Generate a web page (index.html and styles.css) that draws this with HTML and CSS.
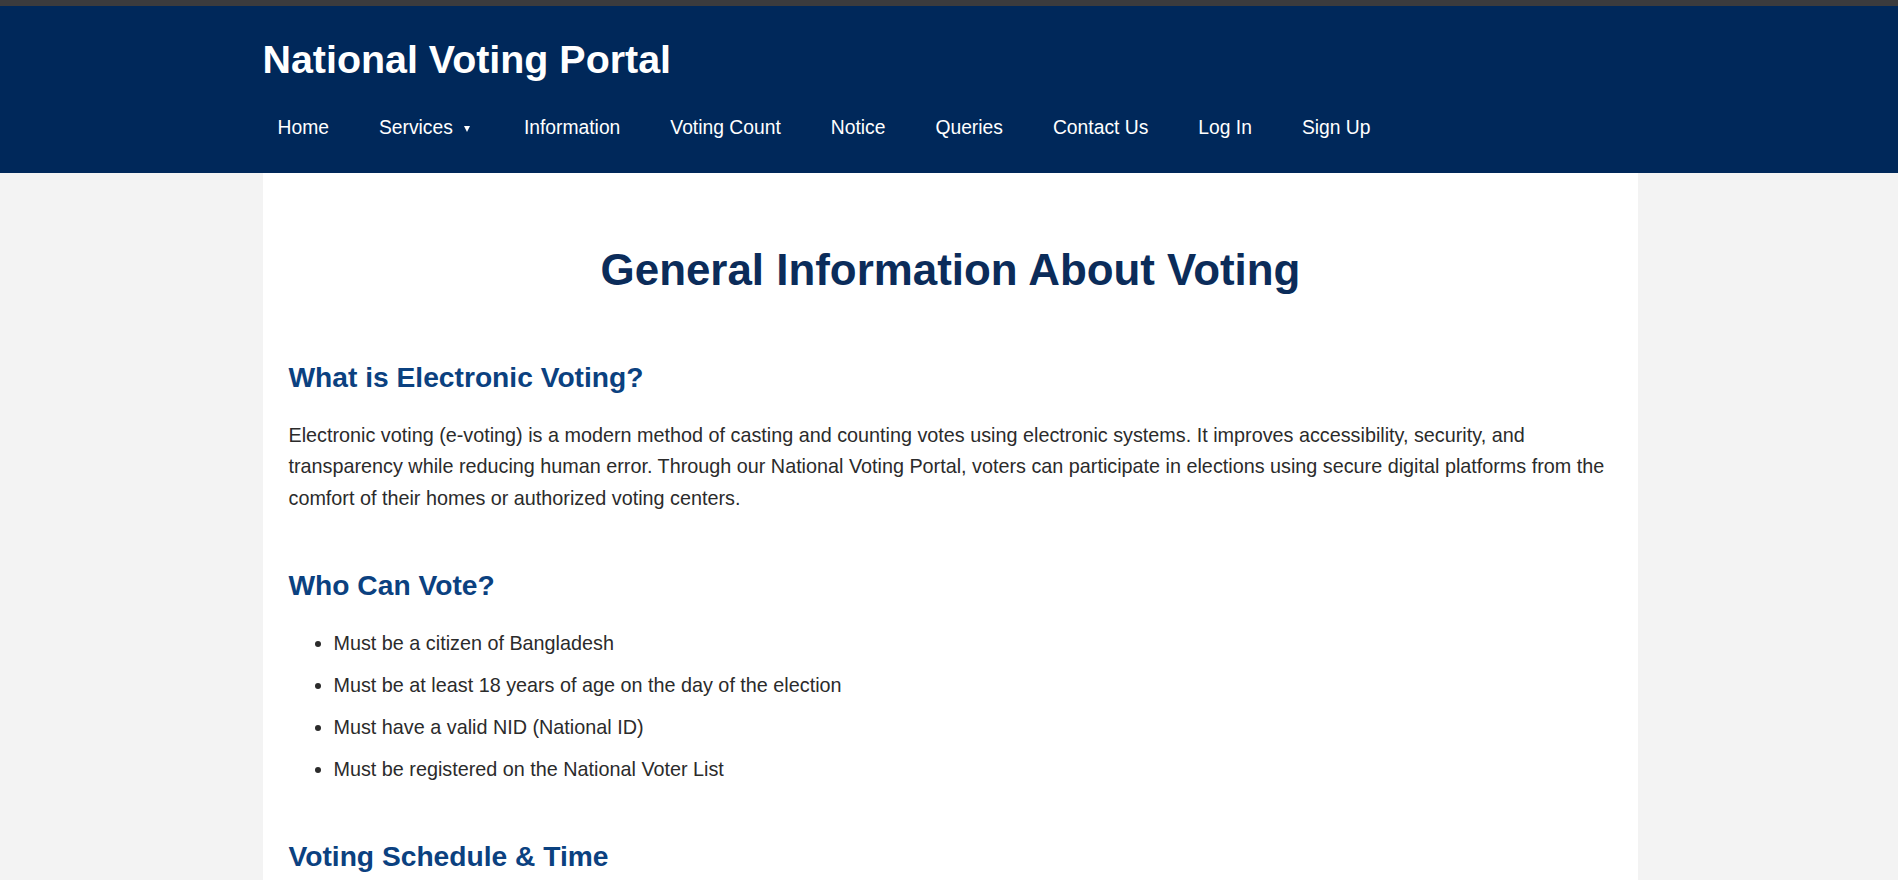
FILE: index.html
```html
<!DOCTYPE html>
<html lang="en">
<head>
<meta charset="utf-8">
<title>General Information - National Voting Portal</title>
<link rel="stylesheet" href="styles.css">
</head>
<body>
<header class="site-header">
  <div class="header-inner">
    <h1 class="site-title">National Voting Portal</h1>
    <nav class="main-nav">
      <ul class="nav-list">
        <li><a class="nav-link" href="#">Home</a></li>
        <li><a class="nav-link" href="#">Services<span class="caret"></span></a></li>
        <li><a class="nav-link" href="#">Information</a></li>
        <li><a class="nav-link" href="#">Voting Count</a></li>
        <li><a class="nav-link" href="#">Notice</a></li>
        <li><a class="nav-link" href="#">Queries</a></li>
        <li><a class="nav-link" href="#">Contact Us</a></li>
        <li><a class="nav-link" href="#">Log In</a></li>
        <li><a class="nav-link" href="#">Sign Up</a></li>
      </ul>
    </nav>
  </div>
</header>
<main class="content">
  <h2 class="page-title">General Information About Voting</h2>
  <section class="info-section">
    <h3 class="section-title">What is Electronic Voting?</h3>
    <p class="section-text">Electronic voting (e-voting) is a modern method of casting and counting votes using electronic systems. It improves accessibility, security, and transparency while reducing human error. Through our National Voting Portal, voters can participate in elections using secure digital platforms from the comfort of their homes or authorized voting centers.</p>
  </section>
  <section class="info-section">
    <h3 class="section-title">Who Can Vote?</h3>
    <ul class="info-list">
      <li>Must be a citizen of Bangladesh</li>
      <li>Must be at least 18 years of age on the day of the election</li>
      <li>Must have a valid NID (National ID)</li>
      <li>Must be registered on the National Voter List</li>
    </ul>
  </section>
  <section class="info-section">
    <h3 class="section-title">Voting Schedule &amp; Time</h3>
    <p class="section-text">Voting takes place on the scheduled election day from 8:00 AM to 4:00 PM. Online voting remains open during the same hours.</p>
  </section>
</main>
</body>
</html>
```

FILE: styles.css
```css
html {
  scrollbar-width: none;
}
html::-webkit-scrollbar {
  display: none;
}
* {
  box-sizing: border-box;
}
body {
  margin: 0;
  background: #f3f3f3;
  font-family: "Liberation Sans", Arial, sans-serif;
  color: #2b2b2b;
}
.site-header {
  background: #00285a;
  border-top: 6px solid #3b3b3d;
  padding: 31px 0 22px;
}
.header-inner {
  width: 1375px;
  margin: 0 auto;
  padding-left: 1px;
}
.site-title {
  margin: 0;
  color: #ffffff;
  font-size: 39.4px;
  font-weight: bold;
  line-height: 44px;
}
.main-nav {
  margin-top: 24px;
}
.nav-list {
  list-style: none;
  margin: 0;
  padding: 0;
  display: flex;
  gap: 20px;
}
.nav-link {
  display: inline-flex;
  align-items: center;
  padding: 12px 15px;
  color: #ffffff;
  text-decoration: none;
  font-size: 19.3px;
  line-height: normal;
}
.caret {
  display: inline-block;
  width: 0;
  height: 0;
  margin-left: 11px;
  margin-right: 4px;
  margin-top: 1px;
  border-left: 3.5px solid transparent;
  border-right: 3.5px solid transparent;
  border-top: 6px solid #ffffff;
}
.content {
  width: 1375px;
  margin: 0 auto;
  background: #ffffff;
  padding: 72px 25px 40px 26px;
  min-height: 900px;
  position: relative;
  left: 1px;
}
.page-title {
  margin: 0 0 65.6px;
  text-align: center;
  color: #0b2c5a;
  font-size: 43.9px;
  font-weight: bold;
  line-height: 50px;
}
.info-section {
  margin-bottom: 54px;
}
.section-title {
  margin: 0 0 27px;
  color: #0b4180;
  font-size: 28.2px;
  font-weight: bold;
  line-height: 32px;
}
.section-text {
  margin: 0;
  font-size: 19.8px;
  line-height: 1.6;
}
.info-list {
  margin: 2.2px 0 0;
  padding-left: 45px;
  font-size: 19.8px;
  line-height: 1.6;
}
.info-list li + li {
  margin-top: 10.5px;
}
```
